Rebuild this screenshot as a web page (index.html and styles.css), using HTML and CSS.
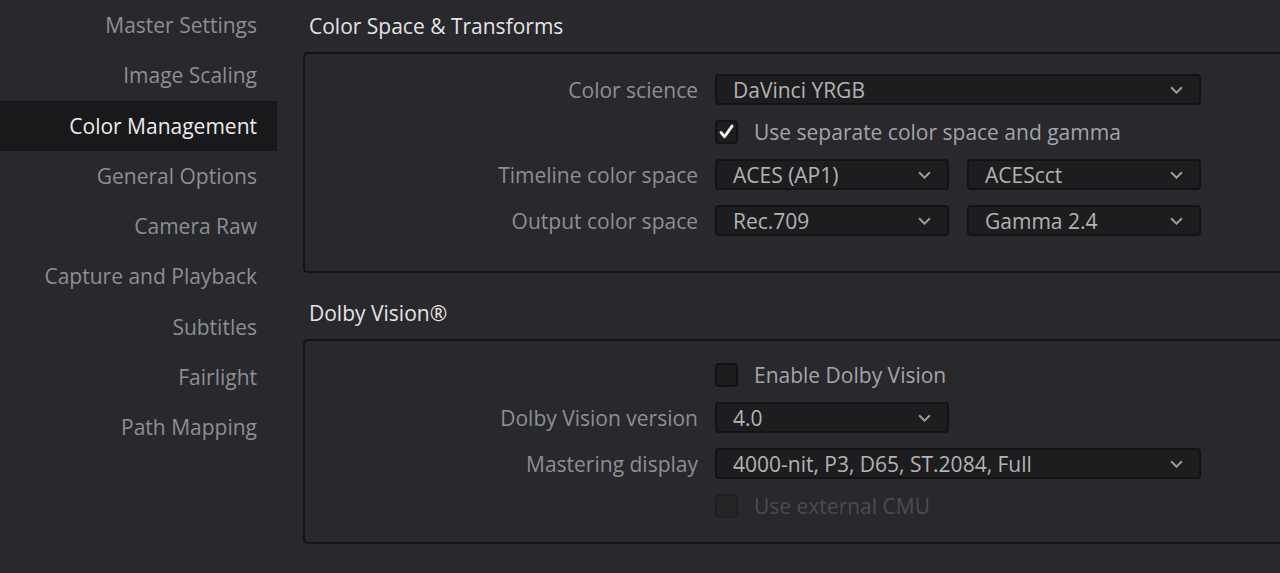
FILE: index.html
```html
<!DOCTYPE html>
<html lang="en">
<head>
  <meta charset="UTF-8" />
  <title>Project Settings</title>
  <link rel="stylesheet" href="styles.css">
</head>
<body>
  <div class="settings">
    <!-- Left column: settings categories -->
    <nav class="sidebar">
      <div class="nav-item">Master Settings</div>
      <div class="nav-item">Image Scaling</div>
      <div class="nav-item active">Color Management</div>
      <div class="nav-item">General Options</div>
      <div class="nav-item">Camera Raw</div>
      <div class="nav-item">Capture and Playback</div>
      <div class="nav-item">Subtitles</div>
      <div class="nav-item">Fairlight</div>
      <div class="nav-item">Path Mapping</div>
    </nav>

    <main class="content">
      <!-- Color Space & Transforms -->
      <h2 class="section-title">Color Space &amp; Transforms</h2>
      <div class="panel panel-color">
        <div class="row">
          <label class="label">Color science</label>
          <div class="select wide"><span>DaVinci YRGB</span><svg class="chev" viewBox="0 0 12 7"><path d="M1 1l5 5 5-5"/></svg></div>
        </div>
        <div class="row check-row">
          <span class="label"></span>
          <div class="check on"><svg viewBox="0 0 24 24"><path d="M5 12.5l4.5 5.5L19 4.5"/></svg></div>
          <span class="check-text">Use separate color space and gamma</span>
        </div>
        <div class="row">
          <label class="label">Timeline color space</label>
          <div class="select half"><span>ACES (AP1)</span><svg class="chev" viewBox="0 0 12 7"><path d="M1 1l5 5 5-5"/></svg></div>
          <div class="select half"><span>ACEScct</span><svg class="chev" viewBox="0 0 12 7"><path d="M1 1l5 5 5-5"/></svg></div>
        </div>
        <div class="row">
          <label class="label">Output color space</label>
          <div class="select half"><span>Rec.709</span><svg class="chev" viewBox="0 0 12 7"><path d="M1 1l5 5 5-5"/></svg></div>
          <div class="select half"><span>Gamma 2.4</span><svg class="chev" viewBox="0 0 12 7"><path d="M1 1l5 5 5-5"/></svg></div>
        </div>
      </div>

      <!-- Dolby Vision -->
      <h2 class="section-title">Dolby Vision®</h2>
      <div class="panel panel-dolby">
        <div class="row check-row">
          <span class="label"></span>
          <div class="check"></div>
          <span class="check-text">Enable Dolby Vision</span>
        </div>
        <div class="row">
          <label class="label">Dolby Vision version</label>
          <div class="select half"><span>4.0</span><svg class="chev" viewBox="0 0 12 7"><path d="M1 1l5 5 5-5"/></svg></div>
        </div>
        <div class="row">
          <label class="label">Mastering display</label>
          <div class="select wide"><span>4000-nit, P3, D65, ST.2084, Full</span><svg class="chev" viewBox="0 0 12 7"><path d="M1 1l5 5 5-5"/></svg></div>
        </div>
        <div class="row check-row disabled">
          <span class="label"></span>
          <div class="check"></div>
          <span class="check-text">Use external CMU</span>
        </div>
      </div>
    </main>
  </div>
</body>
</html>
```

FILE: styles.css
```css
body {
  margin: 0;
  background: #28282d;
  font-family: "Open Sans", "Noto Sans", sans-serif;
  font-size: 21px;
  overflow: hidden;
}

.settings {
  display: flex;
  height: 573px;
}

/* sidebar */
.sidebar {
  width: 277px;
  flex-shrink: 0;
}

.nav-item {
  height: 50.25px;
  line-height: 50px;
  text-align: right;
  padding-right: 20px;
  color: #8d8f93;
}

.nav-item.active {
  background: #19191b;
  color: #ececec;
}

/* right side */
.content {
  flex: 1;
  padding-left: 26px;
  min-width: 0;
}

.section-title {
  margin: 0;
  font-size: 21px;
  font-weight: normal;
  color: #e4e4e4;
  height: 52px;
  line-height: 52px;
  padding-left: 6px;
}

.section-title + .panel + .section-title {
  margin-top: 14px;
}

.panel {
  border: 2px solid #141416;
  border-right: none;
  border-radius: 5px 0 0 5px;
  margin-right: -20px;
  display: flex;
  flex-direction: column;
  gap: 15px;
}

.panel-color {
  padding: 20px 0 35px;
}

.panel-dolby {
  padding: 22px 0 24px;
}

.row {
  display: flex;
  align-items: center;
  height: 31px;
}

.check-row {
  height: 24px;
}

.label {
  width: 393px;
  flex-shrink: 0;
  text-align: right;
  padding-right: 17px;
  color: #8d8f93;
  box-sizing: content-box;
}

/* dropdowns */
.select {
  box-sizing: border-box;
  height: 31px;
  background: #1d1d1f;
  border: 2px solid #131315;
  border-radius: 4px;
  display: flex;
  align-items: center;
  justify-content: space-between;
  padding: 0 16px;
  color: #b3b3b3;
}

.select.wide {
  width: 486px;
}

.select.half {
  width: 234px;
  margin-right: 18px;
}

.chev {
  width: 13px;
  height: 8px;
  fill: none;
  stroke: #9c9c9c;
  stroke-width: 1.8;
}

/* checkboxes */
.check {
  box-sizing: border-box;
  width: 23px;
  height: 24px;
  background: #1d1d1f;
  border: 2px solid #131315;
  border-radius: 4px;
  margin-right: 16px;
  display: flex;
  align-items: center;
  justify-content: center;
}

.check svg {
  width: 22px;
  height: 22px;
  fill: none;
  stroke: #f4f4f4;
  stroke-width: 3.6;
  stroke-linecap: round;
  stroke-linejoin: round;
}

.check-text {
  color: #a3a5a8;
}

.disabled .check {
  background: #242427;
  border-color: #202023;
}

.disabled .check-text {
  color: #4c4c52;
}
```
